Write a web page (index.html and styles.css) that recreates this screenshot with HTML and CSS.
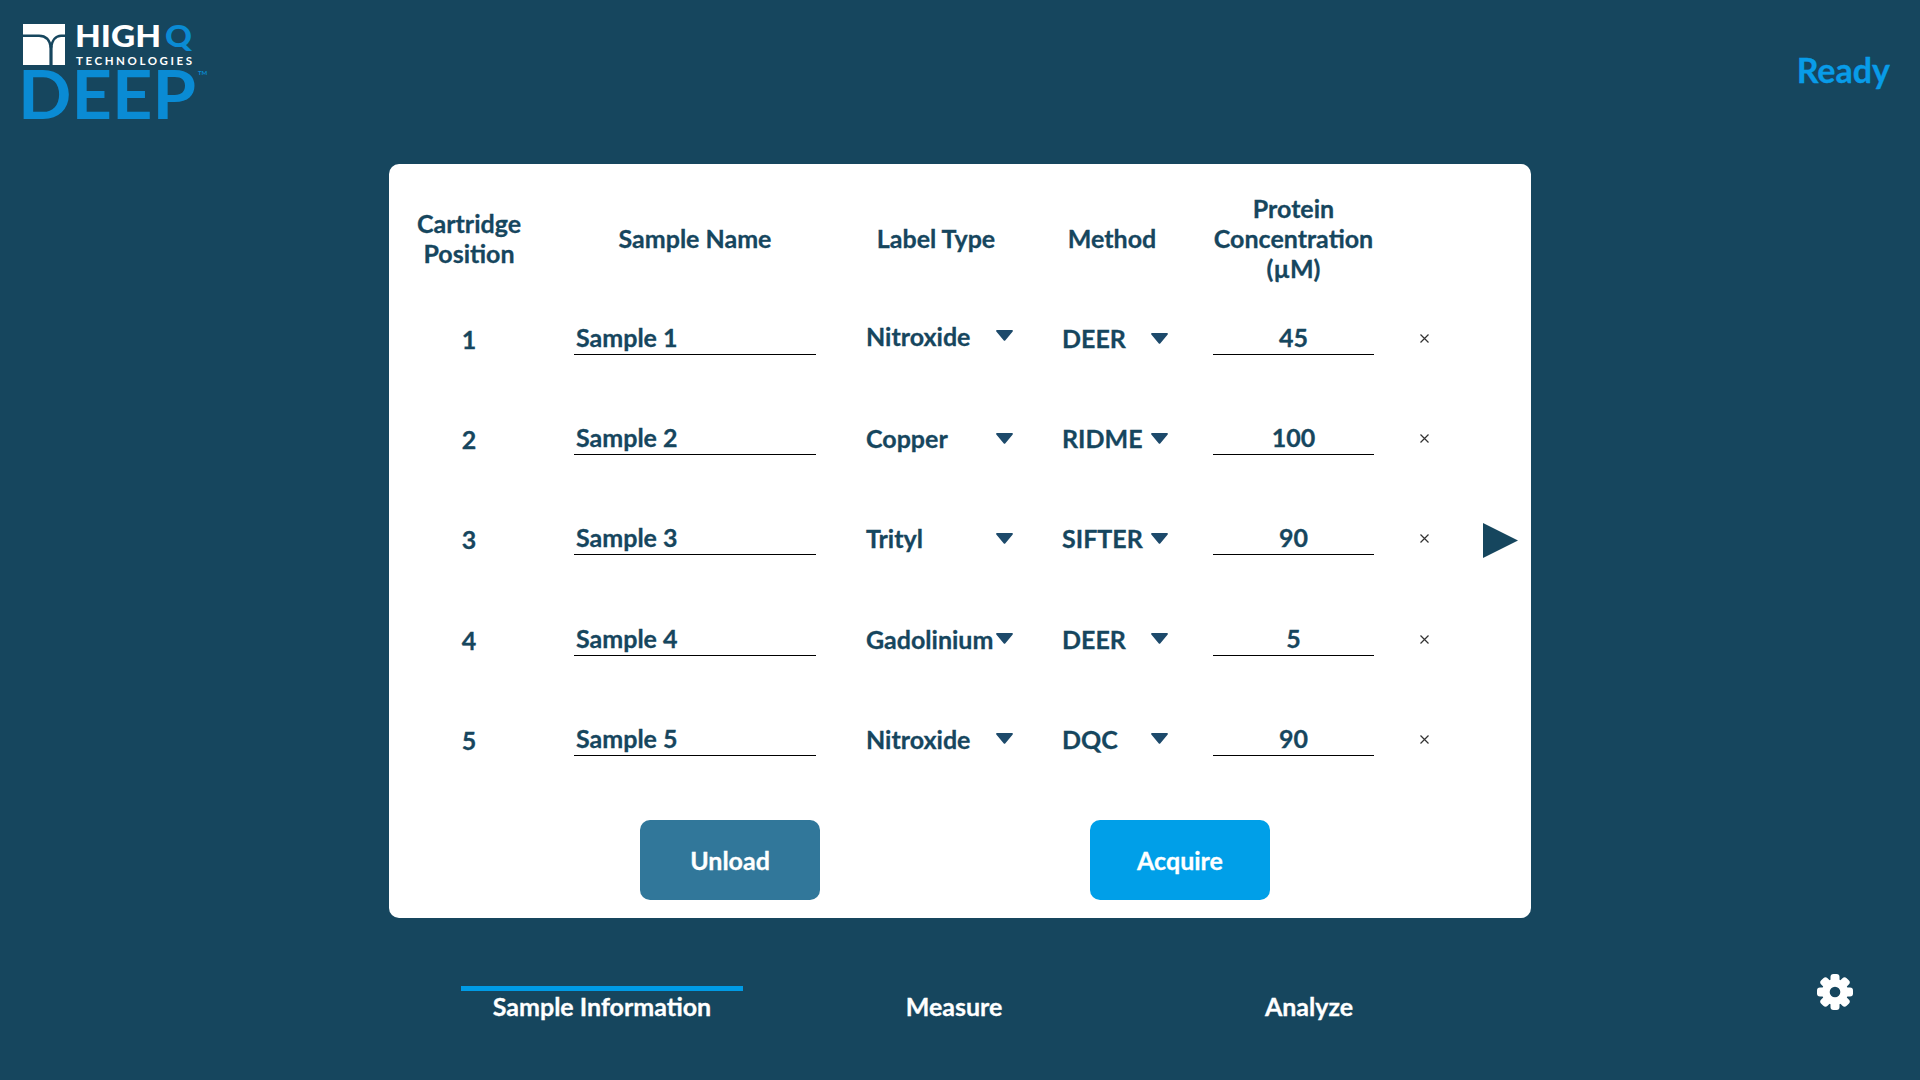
FILE: index.html
```html
<!DOCTYPE html>
<html lang="en">
<head>
  <meta charset="UTF-8">
  <title>HighQ DEEP</title>
  <link rel="stylesheet" href="styles.css">
</head>
<body>
  <div class="page">
    <header class="top-bar">
      <!-- Logo -->
      <svg class="logo" viewBox="0 0 210 100" width="210" height="100">
        <rect x="0" y="0" width="42" height="41" fill="#fff"></rect>
        <path d="M0 11.7H16C23 11.7 27 16 28 24M42 11.7H38C33 11.7 29 16 28 24" fill="none" stroke="#16465e" stroke-width="2.4"></path>
        <path d="M28 22V41" fill="none" stroke="#16465e" stroke-width="3.2"></path>
        <text x="52" y="23" class="logo-high" textLength="86" lengthAdjust="spacingAndGlyphs">HIGH</text>
        <text x="142" y="23" class="logo-q" textLength="27" lengthAdjust="spacingAndGlyphs">Q</text>
        <text x="53" y="41" class="logo-tech" textLength="116" lengthAdjust="spacing">TECHNOLOGIES</text>
        <text x="-5" y="95" class="logo-deep" textLength="178" lengthAdjust="spacingAndGlyphs">DEEP</text>
        <text x="175" y="51" class="logo-tm">TM</text>
      </svg>
      <div class="status">Ready</div>
    </header>

    <main class="card">
      <div class="sample-grid">
        <!-- Cabecalho -->
        <div class="head">Cartridge<br>Position</div>
        <div class="head">Sample Name</div>
        <div class="head">Label Type</div>
        <div class="head">Method</div>
        <div class="head">Protein<br>Concentration<br>(µM)</div>
        <div></div>
        <div></div>

        <!-- Linha 1 -->
        <div class="cell pos">1</div>
        <div class="cell"><div class="field name-field">Sample 1</div></div>
        <div class="cell"><div class="select label-select raised">Nitroxide<svg class="caret" viewBox="0 0 17 11"><path d="M1 0H16C16.8 0 17.2 .8 16.7 1.4L9.2 10.4C8.8 10.9 8.2 10.9 7.8 10.4L.3 1.4C-.2 .8 .2 0 1 0Z"></path></svg></div></div>
        <div class="cell"><div class="select method-select">DEER<svg class="caret" viewBox="0 0 17 11"><path d="M1 0H16C16.8 0 17.2 .8 16.7 1.4L9.2 10.4C8.8 10.9 8.2 10.9 7.8 10.4L.3 1.4C-.2 .8 .2 0 1 0Z"></path></svg></div></div>
        <div class="cell"><div class="field conc-field">45</div></div>
        <div class="cell remove"><svg viewBox="0 0 9 9" width="9" height="9"><path d="M.5 .5L8.5 8.5M8.5 .5L.5 8.5"></path></svg></div>
        <div></div>

        <!-- Linha 2 -->
        <div class="cell pos">2</div>
        <div class="cell"><div class="field name-field">Sample 2</div></div>
        <div class="cell"><div class="select label-select">Copper<svg class="caret" viewBox="0 0 17 11"><path d="M1 0H16C16.8 0 17.2 .8 16.7 1.4L9.2 10.4C8.8 10.9 8.2 10.9 7.8 10.4L.3 1.4C-.2 .8 .2 0 1 0Z"></path></svg></div></div>
        <div class="cell"><div class="select method-select">RIDME<svg class="caret" viewBox="0 0 17 11"><path d="M1 0H16C16.8 0 17.2 .8 16.7 1.4L9.2 10.4C8.8 10.9 8.2 10.9 7.8 10.4L.3 1.4C-.2 .8 .2 0 1 0Z"></path></svg></div></div>
        <div class="cell"><div class="field conc-field">100</div></div>
        <div class="cell remove"><svg viewBox="0 0 9 9" width="9" height="9"><path d="M.5 .5L8.5 8.5M8.5 .5L.5 8.5"></path></svg></div>
        <div></div>

        <!-- Linha 3 -->
        <div class="cell pos">3</div>
        <div class="cell"><div class="field name-field">Sample 3</div></div>
        <div class="cell"><div class="select label-select">Trityl<svg class="caret" viewBox="0 0 17 11"><path d="M1 0H16C16.8 0 17.2 .8 16.7 1.4L9.2 10.4C8.8 10.9 8.2 10.9 7.8 10.4L.3 1.4C-.2 .8 .2 0 1 0Z"></path></svg></div></div>
        <div class="cell"><div class="select method-select">SIFTER<svg class="caret" viewBox="0 0 17 11"><path d="M1 0H16C16.8 0 17.2 .8 16.7 1.4L9.2 10.4C8.8 10.9 8.2 10.9 7.8 10.4L.3 1.4C-.2 .8 .2 0 1 0Z"></path></svg></div></div>
        <div class="cell"><div class="field conc-field">90</div></div>
        <div class="cell remove"><svg viewBox="0 0 9 9" width="9" height="9"><path d="M.5 .5L8.5 8.5M8.5 .5L.5 8.5"></path></svg></div>
        <div class="cell current"><svg viewBox="0 0 35 35" width="35" height="35"><path d="M0 0L35 17.5L0 35Z"></path></svg></div>

        <!-- Linha 4 -->
        <div class="cell pos">4</div>
        <div class="cell"><div class="field name-field">Sample 4</div></div>
        <div class="cell"><div class="select label-select">Gadolinium<svg class="caret" viewBox="0 0 17 11"><path d="M1 0H16C16.8 0 17.2 .8 16.7 1.4L9.2 10.4C8.8 10.9 8.2 10.9 7.8 10.4L.3 1.4C-.2 .8 .2 0 1 0Z"></path></svg></div></div>
        <div class="cell"><div class="select method-select">DEER<svg class="caret" viewBox="0 0 17 11"><path d="M1 0H16C16.8 0 17.2 .8 16.7 1.4L9.2 10.4C8.8 10.9 8.2 10.9 7.8 10.4L.3 1.4C-.2 .8 .2 0 1 0Z"></path></svg></div></div>
        <div class="cell"><div class="field conc-field">5</div></div>
        <div class="cell remove"><svg viewBox="0 0 9 9" width="9" height="9"><path d="M.5 .5L8.5 8.5M8.5 .5L.5 8.5"></path></svg></div>
        <div></div>

        <!-- Linha 5 -->
        <div class="cell pos">5</div>
        <div class="cell"><div class="field name-field">Sample 5</div></div>
        <div class="cell"><div class="select label-select">Nitroxide<svg class="caret" viewBox="0 0 17 11"><path d="M1 0H16C16.8 0 17.2 .8 16.7 1.4L9.2 10.4C8.8 10.9 8.2 10.9 7.8 10.4L.3 1.4C-.2 .8 .2 0 1 0Z"></path></svg></div></div>
        <div class="cell"><div class="select method-select">DQC<svg class="caret" viewBox="0 0 17 11"><path d="M1 0H16C16.8 0 17.2 .8 16.7 1.4L9.2 10.4C8.8 10.9 8.2 10.9 7.8 10.4L.3 1.4C-.2 .8 .2 0 1 0Z"></path></svg></div></div>
        <div class="cell"><div class="field conc-field">90</div></div>
        <div class="cell remove"><svg viewBox="0 0 9 9" width="9" height="9"><path d="M.5 .5L8.5 8.5M8.5 .5L.5 8.5"></path></svg></div>
        <div></div>
      </div>

      <div class="actions">
        <button class="btn btn-unload">Unload</button>
        <button class="btn btn-acquire">Acquire</button>
      </div>
    </main>

    <footer class="bottom-bar">
      <nav class="tabs">
        <div class="tab active">Sample Information</div>
        <div class="tab">Measure</div>
        <div class="tab">Analyze</div>
      </nav>
      <svg class="gear" viewBox="0 0 36 36" width="36" height="36">
        <g fill="#fff">
          <rect x="13.5" y="0" width="9" height="36" rx="3"></rect>
          <rect x="13.5" y="0" width="9" height="36" rx="3" transform="rotate(45 18 18)"></rect>
          <rect x="13.5" y="0" width="9" height="36" rx="3" transform="rotate(90 18 18)"></rect>
          <rect x="13.5" y="0" width="9" height="36" rx="3" transform="rotate(135 18 18)"></rect>
          <circle cx="18" cy="18" r="13"></circle>
        </g>
        <circle cx="18" cy="18" r="5.3" fill="#16465e"></circle>
      </svg>
    </footer>
  </div>
</body>
</html>
```

FILE: styles.css
```css
* {
  box-sizing: border-box;
}
body {
  margin: 0;
  background-color: #16465e;
  color: #16465e;
  font-family: "Lato", sans-serif;
  font-weight: 700;
  font-size: 25px;
  line-height: 30px;
  -webkit-text-stroke: .3px;
}
.page {
  width: 1920px;
  height: 1080px;
  display: flex;
  flex-direction: column;
  overflow: hidden;
}
/* Topo */
.top-bar {
  height: 164px;
  display: flex;
  justify-content: space-between;
  padding: 24px 30px 0 23px;
}
.logo {
  overflow: visible;
}
.logo text {
  font-family: "Lato", sans-serif;
  -webkit-text-stroke: 0;
}
.logo-high {
  font-size: 31px;
  font-weight: 900;
  fill: #fff;
}
.logo-q {
  font-size: 31px;
  font-weight: 900;
  fill: #0a8bd4;
}
.logo-tech {
  font-size: 11.5px;
  font-weight: 700;
  fill: #fff;
}
.logo-deep {
  font-size: 67px;
  font-weight: 700;
  fill: #0a8bd4;
}
.logo-tm {
  font-size: 6px;
  fill: #0a8bd4;
}
.status {
  font-size: 34px;
  line-height: 40px;
  color: #089ce8;
  margin-top: 26px;
}
/* Cartao central */
.card {
  width: 1142px;
  height: 754px;
  margin: 0 auto;
  padding-top: 30px;
  background-color: #fff;
  border-radius: 10px;
}
.sample-grid {
  display: grid;
  grid-template-columns: 160px 292px 190px 162px 201px 60px 77px;
  grid-template-rows: 94px repeat(5, 100.2px);
}
.head {
  text-align: center;
  align-self: start;
  height: 88px;
  display: flex;
  align-items: center;
  justify-content: center;
}
.cell {
  display: flex;
  align-items: center;
}
.pos {
  justify-content: center;
  padding-top: 2px;
}
.field {
  height: 34px;
  line-height: 32px;
  border-bottom: 1px solid #000;
  white-space: nowrap;
}
.name-field {
  width: 242px;
  margin-left: 25px;
  padding-left: 2px;
}
.conc-field {
  width: 161px;
  margin-left: 20px;
  text-align: center;
}
.select {
  display: flex;
  align-items: center;
  justify-content: space-between;
  white-space: nowrap;
}
.label-select {
  width: 147px;
  margin-left: 25px;
}
.method-select {
  width: 106px;
  margin-left: 31px;
}
.label-select.raised {
  margin-bottom: 5px;
}
.caret {
  width: 17px;
  height: 11px;
  flex: none;
  fill: #1d4a6b;
}
.remove {
  justify-content: center;
  padding-top: 1px;
}
.remove svg {
  fill: none;
  stroke: #333;
  stroke-width: 1.2;
}
.current {
  padding: 4px 0 0 29px;
}
.current svg {
  fill: #16465e;
}
/* Botoes */
.actions {
  display: flex;
  gap: 270px;
  padding-left: 251px;
  margin-top: 31px;
}
.btn {
  width: 180px;
  height: 80px;
  border: 0;
  border-radius: 10px;
  color: #fff;
  font-family: "Lato", sans-serif;
  font-weight: 700;
  font-size: 25px;
  -webkit-text-stroke: .3px;
}
.btn-unload {
  background-color: #31779a;
}
.btn-acquire {
  background-color: #009fe8;
}
/* Abas */
.bottom-bar {
  display: flex;
  align-items: flex-start;
  margin-top: 68px;
  padding-left: 461px;
  padding-right: 67px;
}
.tabs {
  display: flex;
  gap: 70px;
  color: #fff;
}
.tab {
  width: 282px;
  padding-top: 1px;
  border-top: 5px solid transparent;
  line-height: 28px;
  text-align: center;
}
.tab:last-child {
  margin-left: 3px;
}
.tab.active {
  border-top-color: #009be5;
}
.gear {
  margin-left: auto;
  margin-top: -12px;
}
```
